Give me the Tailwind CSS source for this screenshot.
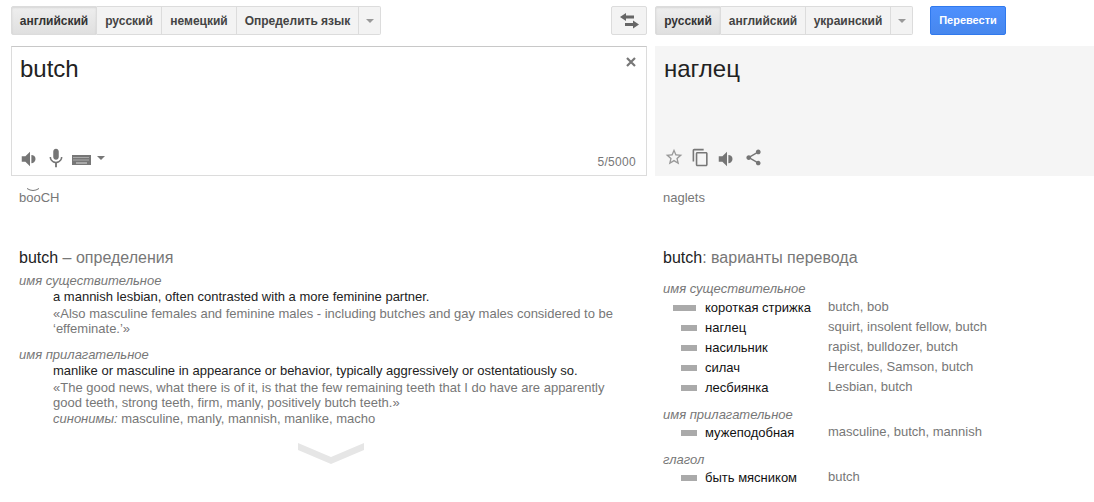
<!DOCTYPE html>
<html><head><meta charset="utf-8"><script src="https://cdn.jsdelivr.net/npm/@tailwindcss/browser@4"></script></head>
<body class="bg-white overflow-hidden">
<div class="w-[1094px] h-[502px] overflow-hidden font-['Liberation_Sans',Arial,sans-serif] text-[13px] relative">
  <!-- toolbar -->
  <div class="flex h-[46px] pt-[6px] pl-[11px] items-start">
    <div class="w-[600px] flex h-[29px] text-[12px] font-bold text-[#444]">
      <div class="w-[86px] flex items-center justify-center border border-[#dcdcdc] rounded-l-[2px] bg-gradient-to-b from-[#eeeeee] to-[#e0e0e0] shadow-[inset_0_1px_2px_rgba(0,0,0,.1)] text-[#333]">английский</div>
      <div class="w-[65px] flex items-center justify-center border-y border-r border-[#dcdcdc] bg-[#f3f3f3]">русский</div>
      <div class="w-[75px] flex items-center justify-center border-y border-r border-[#dcdcdc] bg-[#f3f3f3]">немецкий</div>
      <div class="w-[122px] flex items-center justify-center border-y border-r border-[#dcdcdc] bg-[#f3f3f3]">Определить язык</div>
      <div class="w-[22px] flex items-center justify-center border-y border-r border-[#dcdcdc] bg-[#f3f3f3] rounded-r-[2px]"><div class="w-0 h-0 border-x-[4px] border-x-transparent border-t-[4px] border-t-[#999]"></div></div>
    </div>
    <div class="w-[36px] h-[29px] border border-[#dcdcdc] rounded-[2px] bg-[#f3f3f3] flex items-center justify-center">
      <svg width="19" height="16" viewBox="0 0 19 16"><path d="M0 4 L6 0 V2.500 H14 V5.500 H6 V8 Z" fill="#666"/><path d="M19 11.500 L13 7.500 V10 H5 V13 H13 V15.500 Z" fill="#666"/></svg>
    </div>
    <div class="ml-[8px] flex h-[29px] text-[12px] font-bold text-[#444]">
      <div class="w-[66px] flex items-center justify-center border border-[#dcdcdc] rounded-l-[2px] bg-gradient-to-b from-[#eeeeee] to-[#e0e0e0] shadow-[inset_0_1px_2px_rgba(0,0,0,.1)] text-[#333]">русский</div>
      <div class="w-[85px] flex items-center justify-center border-y border-r border-[#dcdcdc] bg-[#f3f3f3]">английский</div>
      <div class="w-[85px] flex items-center justify-center border-y border-r border-[#dcdcdc] bg-[#f3f3f3]">украинский</div>
      <div class="w-[22px] flex items-center justify-center border-y border-r border-[#dcdcdc] bg-[#f3f3f3] rounded-r-[2px]"><div class="w-0 h-0 border-x-[4px] border-x-transparent border-t-[4px] border-t-[#999]"></div></div>
    </div>
    <div class="ml-[17px] w-[76px] h-[29px] rounded-[2px] border border-[#3079ed] bg-gradient-to-b from-[#4d90fe] to-[#4787ed] flex items-center justify-center text-white text-[11px] font-bold">Перевести</div>
  </div>

  <!-- panels -->
  <div class="flex h-[130px] pl-[11px]">
    <div class="relative w-[636px] border border-[#c8c8c8] border-b-[#dcdcdc] border-r-[#dcdcdc] border-l-[#dcdcdc]">
      <div class="pl-[8px] pt-[6px] text-[24px] leading-[32px] text-[#222]">butch</div>
      <svg class="absolute left-[614px] top-[10px]" width="10" height="10" viewBox="0 0 10 10"><path d="M1 1 L9 9 M9 1 L1 9" stroke="#777" stroke-width="2.200" fill="none"/></svg>
      <div class="absolute left-[7px] top-[100px] flex items-start">
        <svg width="22" height="22" viewBox="0 0 24 24" class="mt-[1px]"><path d="M3 9v6h4l5 5V4L7 9H3z" fill="#757575"/><path d="M13.500 7.500a4.500 4.500 0 0 1 0 9z" fill="#757575"/></svg>
        <svg width="22" height="22" viewBox="0 0 24 24" class="ml-[4px]"><path d="M12 14c1.660 0 3-1.340 3-3V5c0-1.660-1.340-3-3-3S9 3.340 9 5v6c0 1.660 1.340 3 3 3zm5.300-3c0 3-2.540 5.100-5.300 5.100S6.700 14 6.700 11H5c0 3.410 2.720 6.230 6 6.720V22h2v-4.280c3.280-.48 6-3.300 6-6.720h-1.700z" fill="#757575"/></svg>
        <svg width="19" height="10" viewBox="0 0 19 10" class="ml-[5px] mt-[8px]"><rect width="19" height="10" fill="#777"/><path d="M1.500 2.500H17.500M1.500 5H17.500" stroke="#ddd" stroke-width="1" stroke-dasharray="1 1"/><path d="M4 8H15" stroke="#ddd" stroke-width="1"/></svg>
        <div class="w-0 h-0 border-x-[4px] border-x-transparent border-t-[4px] border-t-[#777] ml-[6px] mt-[9px]"></div>
      </div>
      <div class="absolute right-[10px] top-[107px] text-[12px] leading-[16px] tracking-[0.3px] text-[#777]">5/5000</div>
    </div>
    <div class="relative ml-[8px] flex-1 bg-[#f5f5f5]">
      <div class="pl-[9px] pt-[7px] text-[24px] leading-[32px] text-[#222]">наглец</div>
      <div class="absolute left-[9px] top-[101px] flex items-start">
        <svg width="20" height="20" viewBox="0 0 24 24"><path d="M22 9.240l-7.190-.620L12 2 9.190 8.630 2 9.240l5.460 4.730L5.820 21 12 17.270 18.180 21l-1.630-7.030L22 9.240zM12 15.400l-3.760 2.270 1-4.280-3.320-2.880 4.380-.380L12 6.100l1.710 4.040 4.380.380-3.320 2.880 1 4.280L12 15.400z" fill="#999"/></svg>
        <svg width="19" height="19" viewBox="0 0 24 24" class="ml-[7px] mt-[1px]"><path d="M16 1H4c-1.100 0-2 .9-2 2v14h2V3h12V1zm3 4H8c-1.100 0-2 .9-2 2v14c0 1.100.9 2 2 2h11c1.100 0 2-.9 2-2V7c0-1.100-.9-2-2-2zm0 16H8V7h11v14z" fill="#777"/></svg>
        <svg width="22" height="22" viewBox="0 0 24 24" class="ml-[6px] mt-[1px]"><path d="M3 9v6h4l5 5V4L7 9H3z" fill="#757575"/><path d="M13.500 7.500a4.500 4.500 0 0 1 0 9z" fill="#757575"/></svg>
        <svg width="19" height="19" viewBox="0 0 24 24" class="ml-[6px] mt-[1px]"><path d="M18 16.080c-.76 0-1.440.3-1.960.77L8.910 12.700c.05-.23.090-.46.090-.7s-.04-.47-.09-.7l7.050-4.110c.54.500 1.250.81 2.040.81 1.660 0 3-1.340 3-3s-1.340-3-3-3-3 1.340-3 3c0 .24.040.47.090.7L8.040 9.810C7.500 9.310 6.790 9 6 9c-1.660 0-3 1.340-3 3s1.340 3 3 3c.79 0 1.500-.31 2.040-.81l7.120 4.160c-.05.210-.08.430-.08.650 0 1.610 1.310 2.920 2.920 2.920s2.920-1.310 2.920-2.920-1.310-2.920-2.920-2.920z" fill="#757575"/></svg>
      </div>
    </div>
  </div>

  <!-- transliteration -->
  <div class="flex h-[72px] pt-[14px] text-[13px] leading-[16px] text-[#777]">
    <div class="w-[644px] ml-[19px]"><span>b<span class="relative">oo<svg class="absolute left-0 -top-[2px]" width="14" height="4" viewBox="0 0 14 4"><path d="M1 0.500 Q7 4.500 13 0.500" stroke="#777" stroke-width="1" fill="none"/></svg></span>CH</span></div>
    <div>naglets</div>
  </div>

  <!-- lower -->
  <div class="flex">
    <div class="w-[644px] ml-[19px]">
      <div class="text-[16px] leading-[20px] text-[#777] mb-[5px]"><span class="text-[#222]">butch</span> – определения</div>
      <div class="italic text-[#777] leading-[16px]">имя существительное</div>
      <div class="pl-[34px] w-[610px] leading-[15px]">
        <div class="text-[#222] mb-[2px]">a mannish lesbian, often contrasted with a more feminine partner.</div>
        <div class="text-[#777]">«Also masculine females and feminine males - including butches and gay males considered to be ‘effeminate.’»</div>
      </div>
      <div class="italic text-[#777] leading-[16px] mt-[11px]">имя прилагательное</div>
      <div class="pl-[34px] w-[610px] leading-[15px]">
        <div class="text-[#222] mb-[2px]">manlike or masculine in appearance or behavior, typically aggressively or ostentatiously so.</div>
        <div class="text-[#777]">«The good news, what there is of it, is that the few remaining teeth that I do have are apparently good teeth, strong teeth, firm, manly, positively butch teeth.»</div>
        <div class="text-[#777] mt-[1px]"><span class="italic">синонимы:</span> masculine, manly, mannish, manlike, macho</div>
      </div>
      <svg class="block ml-[279px] mt-[16px]" width="66" height="23" viewBox="0 0 66 23"><path d="M0 1 L33 15 L66 1 V8 L33 22 L0 8 Z" fill="#e6e6e6"/></svg>
    </div>
    <div class="flex-1">
      <div class="text-[16px] leading-[20px] text-[#777]"><span class="text-[#222]">butch</span>: варианты перевода</div>
      <div class="italic text-[#777] leading-[16px] mt-[13px] mb-[1px]">имя существительное</div>
      <div class="grid grid-cols-[165px_1fr] auto-rows-[20px] items-center">
        <div class="flex items-center"><span class="w-[23px] h-[6px] ml-[10px] bg-[#aaa]"></span><span class="ml-[9px] text-[#111]">короткая стрижка</span></div><div class="text-[#777] pb-[2px]">butch, bob</div>
        <div class="flex items-center"><span class="w-[16px] h-[6px] ml-[18px] bg-[#aaa]"></span><span class="ml-[8px] text-[#111]">наглец</span></div><div class="text-[#777] pb-[2px]">squirt, insolent fellow, butch</div>
        <div class="flex items-center"><span class="w-[16px] h-[6px] ml-[18px] bg-[#aaa]"></span><span class="ml-[8px] text-[#111]">насильник</span></div><div class="text-[#777] pb-[2px]">rapist, bulldozer, butch</div>
        <div class="flex items-center"><span class="w-[16px] h-[6px] ml-[18px] bg-[#aaa]"></span><span class="ml-[8px] text-[#111]">силач</span></div><div class="text-[#777] pb-[2px]">Hercules, Samson, butch</div>
        <div class="flex items-center"><span class="w-[16px] h-[6px] ml-[18px] bg-[#aaa]"></span><span class="ml-[8px] text-[#111]">лесбиянка</span></div><div class="text-[#777] pb-[2px]">Lesbian, butch</div>
      </div>
      <div class="italic text-[#777] leading-[16px] mt-[9px]">имя прилагательное</div>
      <div class="grid grid-cols-[165px_1fr] auto-rows-[20px] items-center">
        <div class="flex items-center"><span class="w-[16px] h-[6px] ml-[18px] bg-[#aaa]"></span><span class="ml-[8px] text-[#111]">мужеподобная</span></div><div class="text-[#777] pb-[2px]">masculine, butch, mannish</div>
      </div>
      <div class="italic text-[#777] leading-[16px] mt-[9px]">глагол</div>
      <div class="grid grid-cols-[165px_1fr] auto-rows-[20px] items-center">
        <div class="flex items-center"><span class="w-[16px] h-[6px] ml-[18px] bg-[#aaa]"></span><span class="ml-[8px] text-[#111]">быть мясником</span></div><div class="text-[#777] pb-[2px]">butch</div>
      </div>
    </div>
  </div>
</div>
</body></html>
